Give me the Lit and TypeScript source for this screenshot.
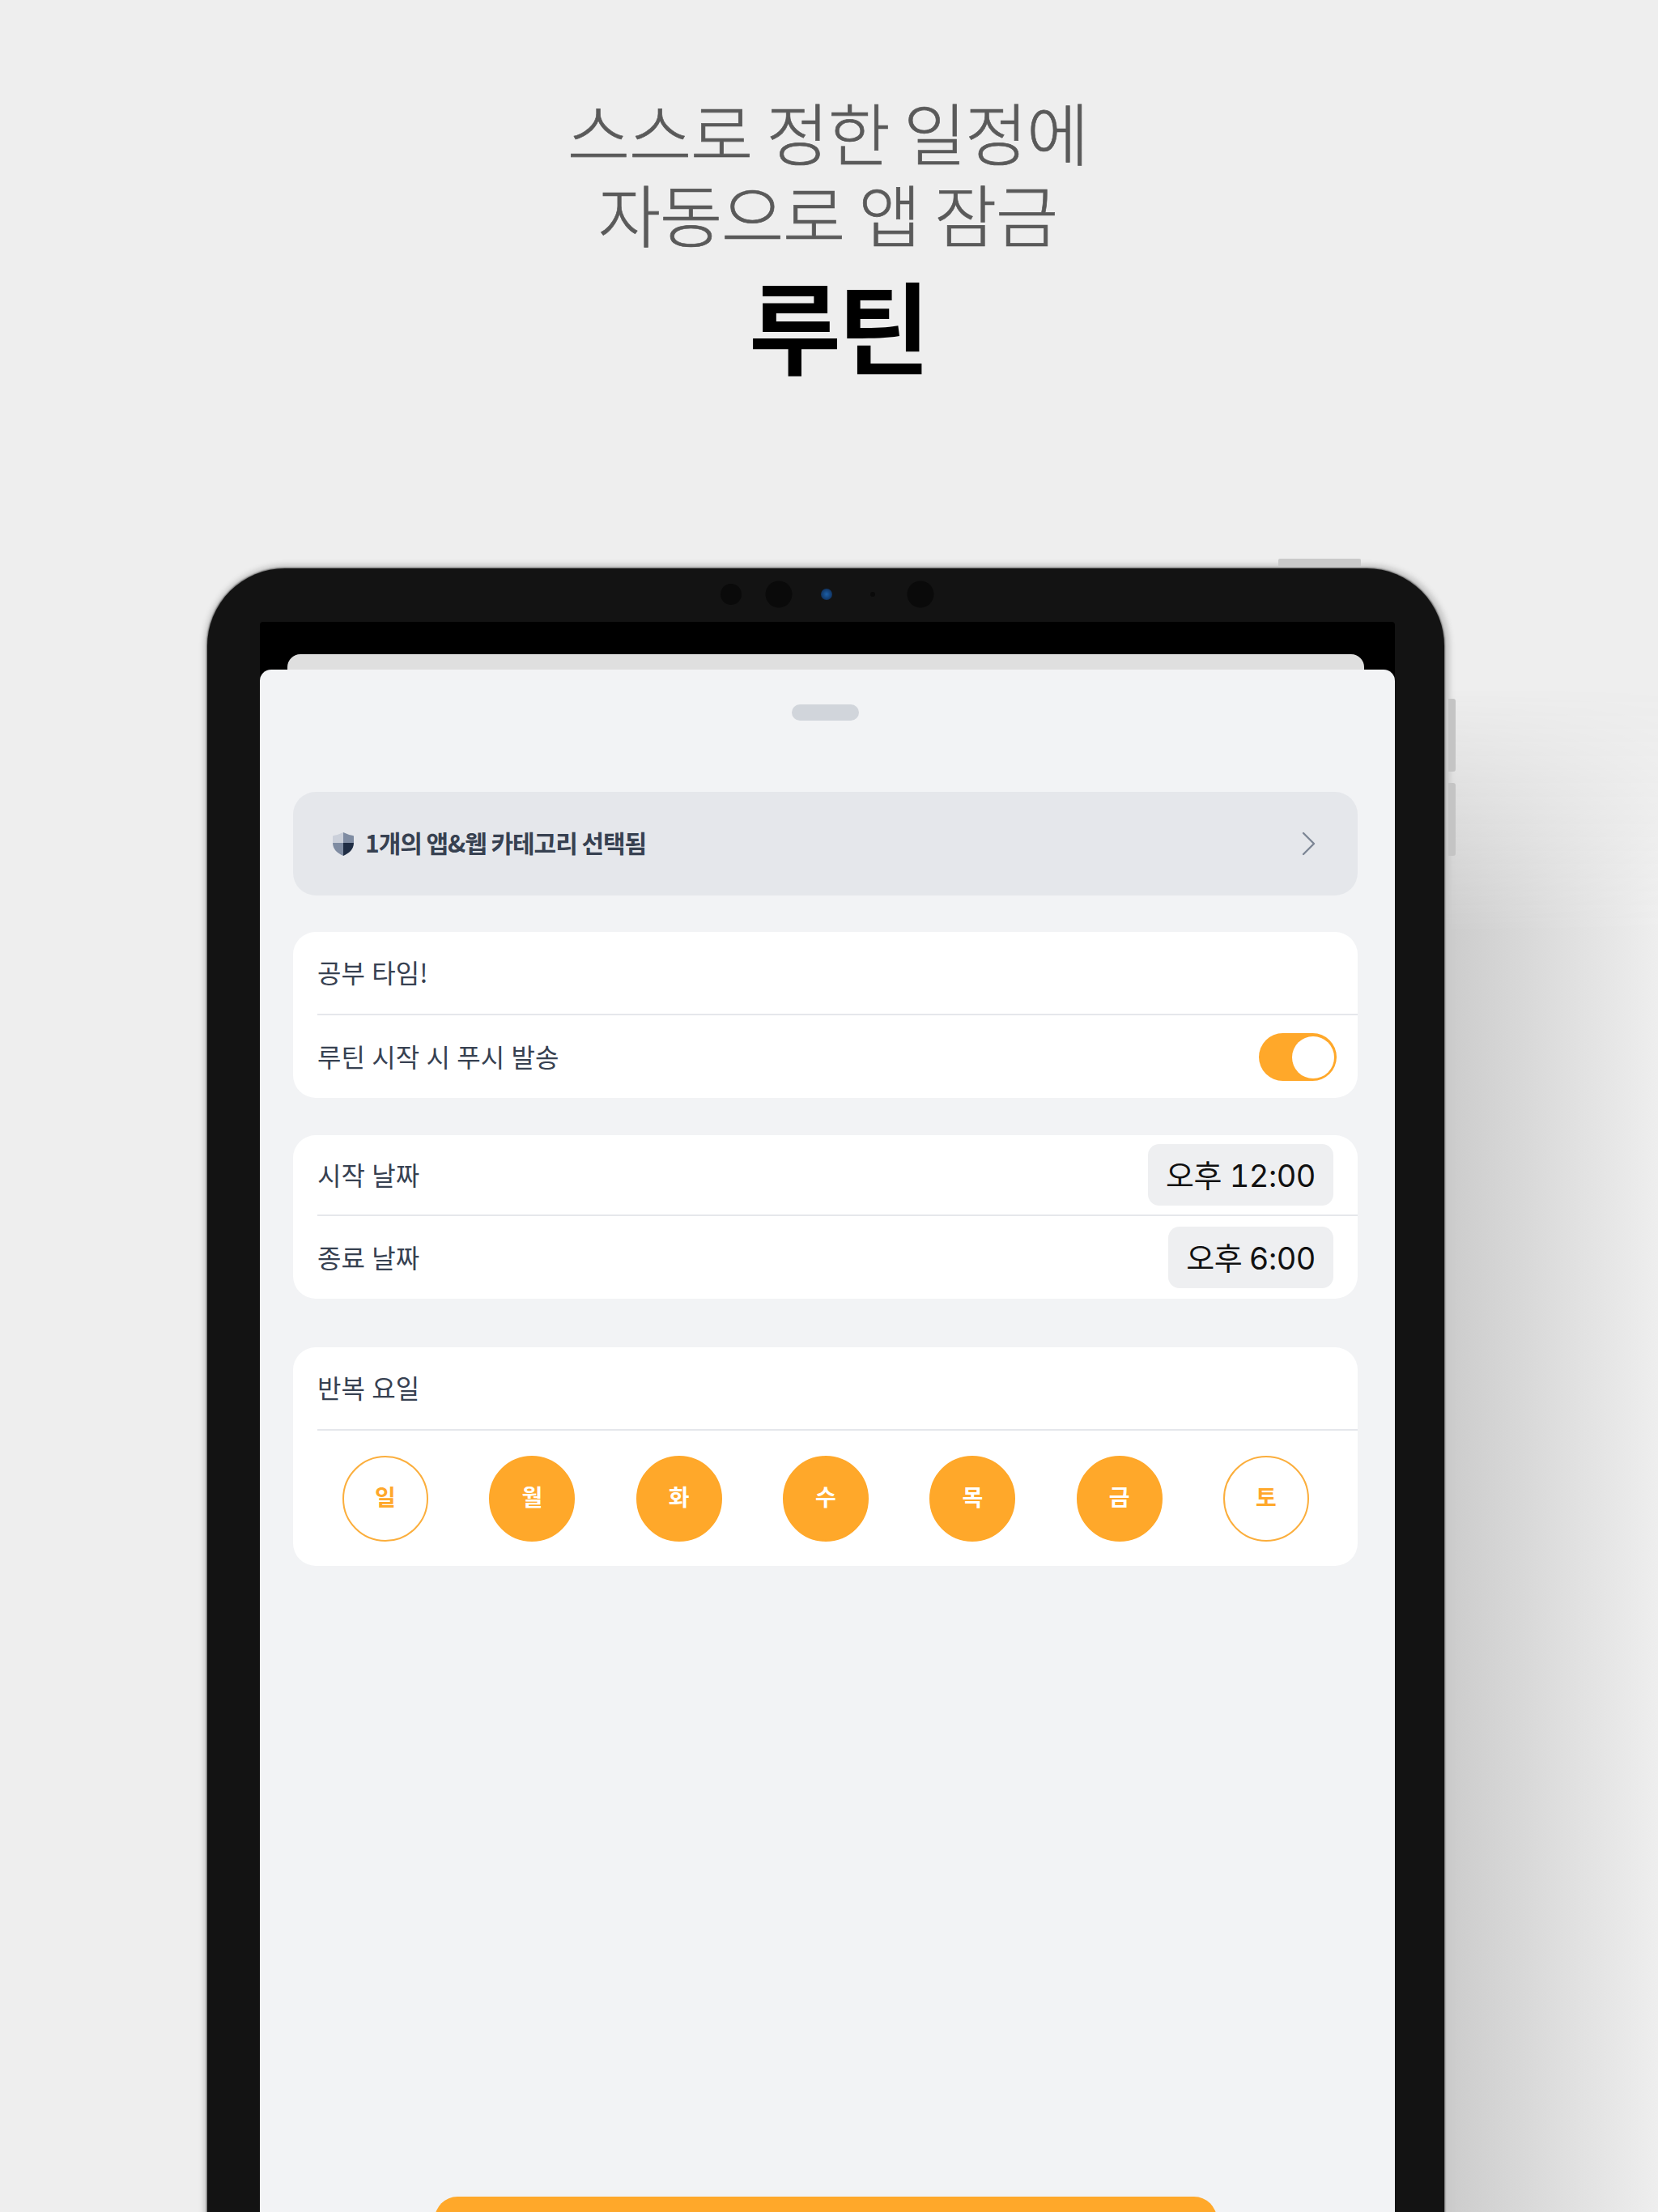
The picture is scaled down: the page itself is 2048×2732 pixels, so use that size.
import { LitElement, html, css } from "lit";
import { customElement } from "lit/decorators.js";

const DAYS: [string, boolean][] = [
  ["일", false],
  ["월", true],
  ["화", true],
  ["수", true],
  ["목", true],
  ["금", true],
  ["토", false],
];

@customElement("app-root")
export class AppRoot extends LitElement {
  static styles = css`
    :host {
      display: block;
      width: 2048px;
      height: 2732px;
      overflow: hidden;
      position: relative;
      background: #eeeeee;
      font-family: "Noto Sans CJK KR", "Noto Sans", sans-serif;
    }
    .shadow {
      position: absolute;
      left: 1700px;
      top: 850px;
      right: 0;
      bottom: 0;
      background: linear-gradient(90deg, #cdcdcd 0, #cdcdcd 95px, #eeeeee 348px);
      -webkit-mask-image: linear-gradient(180deg, transparent 0, #000 300px);
      mask-image: linear-gradient(180deg, transparent 0, #000 300px);
    }
    .head {
      position: relative;
      height: 702px;
      box-sizing: border-box;
      padding: 111px 3px 0 0;
      display: flex;
      flex-direction: column;
      align-items: center;
    }
    .sub {
      font-size: 84px;
      line-height: 101px;
      font-weight: 300;
      -webkit-text-stroke: 0.7px #5a5a5a;
      color: #5a5a5a;
      text-align: center;
      letter-spacing: -1.2px;
    }
    .big {
      font-size: 124px;
      line-height: 150px;
      font-weight: 700;
      color: #000;
      letter-spacing: -4px;
      margin-left: 25px;
      margin-top: 11px;
    }
    .device {
      position: relative;
      margin-left: 256px;
      width: 1528px;
      height: 2100px;
      box-sizing: border-box;
      background: #131313;
      border-radius: 96px 96px 0 0;
      padding: 66px 61px 0 65px;
      box-shadow: 0 0 2px 1px #666, 1.5px 0 6px 5px #c9c9c9;
    }
    .btn-top {
      position: absolute;
      left: 1323px;
      top: -12px;
      width: 102px;
      height: 9px;
      background: #c9c9c9;
      border-radius: 2px 2px 0 0;
    }
    .btn-side {
      position: absolute;
      left: 1533px;
      width: 9px;
      background: #c4c4c4;
      border-radius: 0 3px 3px 0;
    }
    .vol1 {
      top: 161px;
      height: 90px;
    }
    .vol2 {
      top: 265px;
      height: 90px;
    }
    .cam {
      position: absolute;
      border-radius: 50%;
      background: #0a0a0a;
      top: 32px;
      transform: translate(-50%, -50%);
    }
    .c1 {
      left: 647px;
      width: 26px;
      height: 26px;
    }
    .c2 {
      left: 706px;
      width: 33px;
      height: 33px;
    }
    .c3 {
      left: 765px;
      width: 14px;
      height: 14px;
      background: radial-gradient(circle, #1c5fa8, #0c2346);
    }
    .c4 {
      left: 822px;
      width: 6px;
      height: 6px;
    }
    .c5 {
      left: 881px;
      width: 33px;
      height: 33px;
    }
    .screen {
      background: #000;
      height: 2100px;
      border-radius: 4px 4px 0 0;
      padding-top: 40px;
      box-sizing: border-box;
    }
    .back {
      height: 19px;
      margin: 0 38px 0 34px;
      background: #dfdfdf;
      border-radius: 16px 16px 0 0;
    }
    .sheet {
      background: #f2f3f5;
      border-radius: 14px 14px 0 0;
      height: 2000px;
      box-sizing: border-box;
      padding: 43px 46px 0 41px;
      display: flex;
      flex-direction: column;
    }
    .grab {
      align-self: center;
      width: 83px;
      height: 20px;
      border-radius: 10px;
      background: #d1d5db;
      margin-bottom: 88px;
    }
    .sel {
      height: 128px;
      border-radius: 28px;
      background: #e5e7eb;
      display: flex;
      align-items: center;
      padding: 0 52px 0 48px;
      margin-bottom: 45px;
    }
    .sel-text {
      flex: 1;
      margin-left: 13px;
      padding-bottom: 5px;
      font-size: 30px;
      font-weight: 700;
      color: #374151;
      letter-spacing: -1.05px;
    }
    .card {
      background: #fff;
      border-radius: 28px;
      margin-bottom: 46px;
    }
    .card.times {
      margin-bottom: 45px;
    }
    .card.days-card {
      margin-top: 15px;
    }
    .row {
      margin-left: 30px;
      height: 102px;
      box-sizing: border-box;
      display: flex;
      align-items: center;
      justify-content: space-between;
      font-size: 32px;
      word-spacing: 1.2px;
      color: #374151;
      padding-right: 30px;
    }
    .row.div {
      height: 103px;
      border-bottom: 2px solid #e5e7eb;
    }
    .card.times .row.div {
      height: 100px;
    }
    .label {
      padding-bottom: 3px;
    }
    .toggle {
      width: 96px;
      height: 59px;
      border-radius: 30px;
      background: #ffa82a;
      position: relative;
      margin-right: -4px;
    }
    .knob {
      position: absolute;
      right: 3px;
      top: 4px;
      width: 52px;
      height: 52px;
      border-radius: 50%;
      background: #fff;
    }
    .pill {
      height: 76px;
      border-radius: 14px;
      background: #eeeff1;
      padding: 0 22px 3px;
      box-sizing: border-box;
      display: flex;
      align-items: center;
      font-size: 38px;
      letter-spacing: -0.5px;
      word-spacing: 0;
      font-feature-settings: "tnum";
      color: #111;
      font-family: Inter, "Noto Sans CJK KR", sans-serif;
    }
    .pill.short {
      word-spacing: -1px;
    }
    .days {
      display: flex;
      justify-content: space-between;
      padding: 31px 60px 30px 61px;
    }
    .day {
      width: 106px;
      height: 106px;
      border-radius: 50%;
      box-sizing: border-box;
      border: 2px solid #fbae3c;
      padding-bottom: 6px;
      display: flex;
      align-items: center;
      justify-content: center;
      font-size: 28px;
      font-weight: 700;
      color: #ffa82a;
    }
    .day.on {
      background: #ffa82a;
      border-color: #ffa82a;
      color: #fff;
    }
    .cta {
      align-self: center;
      width: 966px;
      height: 100px;
      flex: none;
      border-radius: 28px;
      background: #ffa82a;
      margin-top: 733px;
    }
  `;

  render() {
    return html`
      <div class="shadow"></div>
      <div class="head">
        <div class="sub">스스로 정한 일정에<br />자동으로 앱 잠금</div>
        <div class="big">루틴</div>
      </div>
      <div class="device">
        <div class="btn-top"></div>
        <div class="btn-side vol1"></div>
        <div class="btn-side vol2"></div>
        <span class="cam c1"></span><span class="cam c2"></span><span class="cam c3"></span
        ><span class="cam c4"></span><span class="cam c5"></span>
        <div class="screen">
          <div class="back"></div>
          <div class="sheet">
            <div class="grab"></div>
            <div class="sel">
              <svg width="28" height="31" viewBox="0 0 28 31">
                <path d="M14 1 Q8 4 2 5 Q1 5 1 6 V14 H14 Z" fill="#cbd0da" />
                <path d="M14 1 Q20 4 26 5 Q27 5 27 6 V14 H14 Z" fill="#7f8ca2" />
                <path d="M1 14 C1 22 7 27 14 30 V14 Z" fill="#7f8ca2" />
                <path d="M27 14 C27 22 21 27 14 30 V14 Z" fill="#1f2d44" />
              </svg>
              <span class="sel-text">1개의 앱&웹 카테고리 선택됨</span>
              <svg width="18" height="30" viewBox="0 0 18 30" fill="none">
                <path d="M3 2 L16 15 L3 28" stroke="#7d8695" stroke-width="2.4" stroke-linecap="round" stroke-linejoin="round" />
              </svg>
            </div>
            <div class="card">
              <div class="row div"><span class="label">공부 타임!</span></div>
              <div class="row">
                <span class="label">루틴 시작 시 푸시 발송</span>
                <div class="toggle"><div class="knob"></div></div>
              </div>
            </div>
            <div class="card times">
              <div class="row div">
                <span class="label">시작 날짜</span>
                <div class="pill">오후 12:00</div>
              </div>
              <div class="row">
                <span class="label">종료 날짜</span>
                <div class="pill short">오후 6:00</div>
              </div>
            </div>
            <div class="card days-card">
              <div class="row div"><span class="label">반복 요일</span></div>
              <div class="days">
                ${DAYS.map(([d, on]) => html`<div class="day ${on ? "on" : ""}">${d}</div>`)}
              </div>
            </div>
            <div class="cta"></div>
          </div>
        </div>
      </div>
    `;
  }
}
